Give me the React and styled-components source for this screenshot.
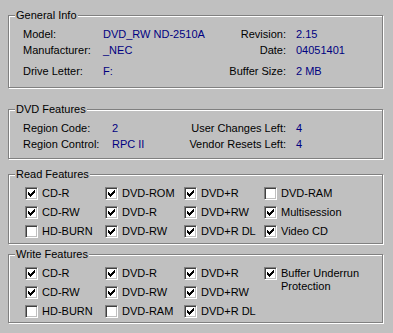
import React from 'react';
import styled, { createGlobalStyle } from 'styled-components';

const Global = createGlobalStyle`
  html, body {
    margin: 0;
    padding: 0;
    background: #c0c0c0;
  }
  body {
    font-family: "Liberation Sans", Arial, sans-serif;
    font-size: 11px;
    line-height: 13px;
    color: #000;
  }
`;

const Dialog = styled.div`
  width: 393px;
  height: 333px;
  box-sizing: border-box;
  padding: 15px 10px 0 8px;
  display: flex;
  flex-direction: column;
`;

const Group = styled.div`
  position: relative;
  box-sizing: border-box;
  height: ${({ h }) => h}px;
  margin-top: ${({ gap }) => gap || 0}px;
  border: 1px solid #808080;
  box-shadow: 1px 1px 0 #fff, inset 1px 1px 0 #fff;
  padding: 12px 0 0 14px;
`;

const Legend = styled.span`
  position: absolute;
  top: -7px;
  left: 6px;
  padding: 0 1px;
  background: #c0c0c0;
  white-space: nowrap;
`;

const InfoGrid = styled.div`
  display: grid;
  grid-template-columns: ${({ cols }) => cols};
  grid-template-rows: ${({ rows }) => rows};
  column-gap: 10px;
  white-space: nowrap;
`;

const Label = styled.span`
  justify-self: ${({ right }) => (right ? 'end' : 'start')};
`;

const Value = styled.span`
  color: #000080;
`;

const CheckGrid = styled.div`
  display: grid;
  grid-template-columns: 80px 79px 80px 1fr;
  grid-auto-rows: 13px;
  row-gap: 6px;
  padding-left: 2px;
`;

const Item = styled.label`
  display: flex;
  align-items: flex-start;
  gap: 4px;
  white-space: ${({ wrap }) => (wrap ? 'normal' : 'nowrap')};
  grid-row: ${({ span }) => (span ? `span ${span}` : 'auto')};
`;

const ItemText = styled.span`
  max-width: ${({ w }) => (w ? `${w}px` : 'none')};
`;

const Box = styled.span`
  flex: none;
  box-sizing: border-box;
  width: 13px;
  height: 13px;
  padding: 2px;
  background: #fff;
  border: 1px solid;
  border-color: #808080 #fff #fff #808080;
  box-shadow: inset 1px 1px 0 #404040, inset -1px -1px 0 #c0c0c0;

  svg {
    display: block;
  }
`;

const CheckBox = ({ checked }) => (
  <Box>
    {checked && (
      <svg width="7" height="7" viewBox="0 0 7 7" shapeRendering="crispEdges">
        <path
          fill="#000"
          d="M6 0h1v1h-1zM5 1h2v1h-2zM0 2h1v1h-1zM4 2h3v1h-3zM0 3h2v1h-2zM3 3h3v1h-3zM0 4h5v1h-5zM1 5h3v1h-3zM2 6h1v1h-1z"
        />
      </svg>
    )}
  </Box>
);

const Check = ({ label, checked, span, w }) => (
  <Item span={span} wrap={w ? 1 : 0}>
    <CheckBox checked={checked} />
    <ItemText w={w}>{label}</ItemText>
  </Item>
);

const readFeatures = [
  ['CD-R', true], ['DVD-ROM', true], ['DVD+R', true], ['DVD-RAM', false],
  ['CD-RW', true], ['DVD-R', true], ['DVD+RW', true], ['Multisession', true],
  ['HD-BURN', false], ['DVD-RW', true], ['DVD+R DL', true], ['Video CD', true],
];

const writeRows = [
  [['CD-R', true], ['DVD-R', true], ['DVD+R', true]],
  [['CD-RW', true], ['DVD-RW', true], ['DVD+RW', true]],
  [['HD-BURN', false], ['DVD-RAM', false], ['DVD+R DL', true]],
];

export default function App() {
  return (
    <>
      <Global />
      <Dialog>
        <Group h={73}>
          <Legend>General Info</Legend>
          <InfoGrid cols="70px 87px 86px 1fr" rows="16px 21px 13px">
            <Label>Model:</Label>
            <Value>DVD_RW ND-2510A</Value>
            <Label right>Revision:</Label>
            <Value>2.15</Value>
            <Label>Manufacturer:</Label>
            <Value>_NEC</Value>
            <Label right>Date:</Label>
            <Value>04051401</Value>
            <Label>Drive Letter:</Label>
            <Value>F:</Value>
            <Label right>Buffer Size:</Label>
            <Value>2 MB</Value>
          </InfoGrid>
        </Group>

        <Group h={50} gap={21}>
          <Legend>DVD Features</Legend>
          <InfoGrid cols="79px 58px 106px 1fr" rows="16px 13px">
            <Label>Region Code:</Label>
            <Value>2</Value>
            <Label right>User Changes Left:</Label>
            <Value>4</Value>
            <Label>Region Control:</Label>
            <Value>RPC II</Value>
            <Label right>Vendor Resets Left:</Label>
            <Value>4</Value>
          </InfoGrid>
        </Group>

        <Group h={70} gap={15}>
          <Legend>Read Features</Legend>
          <CheckGrid>
            {readFeatures.map(([label, checked]) => (
              <Check key={label} label={label} checked={checked} />
            ))}
          </CheckGrid>
        </Group>

        <Group h={69} gap={10}>
          <Legend>Write Features</Legend>
          <CheckGrid>
            {writeRows.map((row, i) => (
              <React.Fragment key={i}>
                {row.map(([label, checked]) => (
                  <Check key={label} label={label} checked={checked} />
                ))}
                {i === 0 && (
                  <Check label="Buffer Underrun Protection" checked span={3} w={88} />
                )}
              </React.Fragment>
            ))}
          </CheckGrid>
        </Group>
      </Dialog>
    </>
  );
}
